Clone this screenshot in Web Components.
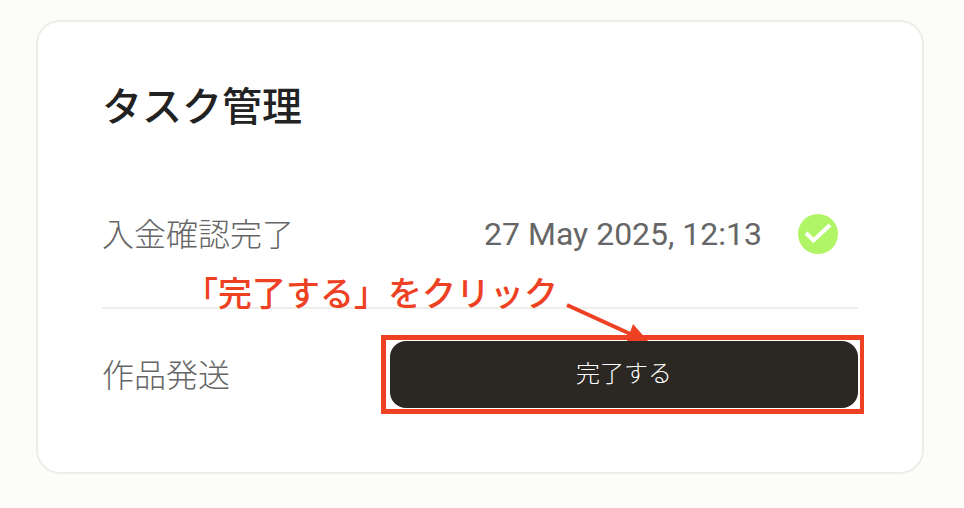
<!DOCTYPE html>
<html lang="ja">
<head>
<meta charset="utf-8">
<title>タスク管理</title>
<style>
  html, body { margin:0; height:100%; }
  body { background:#fcfcfa; font-family:Roboto, "Noto Sans CJK JP", sans-serif; }
</style>
</head>
<body>
<task-card>
  <span slot="title">タスク管理</span>
  <task-row label="入金確認完了" date="27 May 2025, 12:13" done></task-row>
  <task-row label="作品発送" action="完了する" last></task-row>
  <click-note text="「完了する」をクリック"></click-note>
</task-card>

<script>
/* card */
class TaskCard extends HTMLElement {
	constructor() {
		super();
		let shadowRoot = this.attachShadow({ mode: 'open' });
		shadowRoot.innerHTML = `
		<style>
			:host {
				display:block;
				position:relative;
				box-sizing:border-box;
				width:888px;
				height:454px;
				margin:20px 0 0 36px;
				padding:61px 64px 0 64px;
				background:#fff;
				border:2px solid #eeeee9;
				border-radius:24px;
			}
			h2 {
				margin:0 0 49px;
				font-size:40px;
				line-height:50px;
				font-weight:500;
				color:#222;
			}
		</style>
		<h2><slot name="title"></slot></h2>
		<slot></slot>
		`;
	}
}

/* row: label on the left, then a date + check or a button */
class TaskRow extends HTMLElement {
	constructor() {
		super();
		let shadowRoot = this.attachShadow({ mode: 'open' });
		var date = this.getAttribute('date');
		var action = this.getAttribute('action');
		var right = action
			? `<button>${action}</button>`
			: `<span class="date">${date}</span>
			   <svg viewBox="0 0 40 40" width="40" height="40"><circle cx="20" cy="20" r="20" fill="#b0f565"/><path d="M8 19l7.5 7.5L32 11" fill="none" stroke="#fff" stroke-width="4"/></svg>`;
		shadowRoot.innerHTML = `
		<style>
			:host {
				display:flex;
				box-sizing:border-box;
				align-items:center;
				justify-content:space-between;
				font-size:32px;
				color:#666;
			}
			:host(:not([last])) {
				height:127px;
				padding:0 20px 21px 0;
				border-bottom:2px solid #eeeee9;
			}
			:host([last]) { height:131px; }
			.label { font-weight:300; margin-bottom:4px; }
			.right { display:flex; align-items:center; gap:36px; }
			svg { display:block; }
			button {
				display:block;
				width:468px;
				height:67px;
				padding:0 0 7px;
				border:none;
				border-radius:16px;
				background:#2b2824;
				color:#fff;
				font:300 24px Roboto, "Noto Sans CJK JP", sans-serif;
			}
		</style>
		<span class="label">${this.getAttribute('label')}</span>
		<div class="right">${right}</div>
		`;
	}
}

/* red annotation over the card */
class ClickNote extends HTMLElement {
	constructor() {
		super();
		let shadowRoot = this.attachShadow({ mode: 'open' });
		shadowRoot.innerHTML = `
		<style>
			:host {
				position:absolute;
				left:0;
				top:0;
				width:100%;
				height:100%;
				pointer-events:none;
			}
			.text {
				position:absolute;
				left:146px;
				top:250px;
				font-size:34px;
				line-height:44px;
				font-weight:500;
				color:#ee4123;
				white-space:nowrap;
			}
			.box {
				position:absolute;
				left:343px;
				top:313px;
				width:483px;
				height:79px;
				box-sizing:border-box;
				border:solid #ee4123;
				border-width:5px 4px 5px 5px;
			}
			svg { position:absolute; left:0; top:0; }
		</style>
		<div class="text">${this.getAttribute('text')}</div>
		<div class="box"></div>
		<svg width="884" height="450">
			<path d="M529 283l70 32" stroke="#ee4123" stroke-width="4" fill="none"/>
			<path d="M610 319h-21l6-17z" fill="#ee4123"/>
		</svg>
		`;
	}
}

customElements.define('task-card', TaskCard);
customElements.define('task-row', TaskRow);
customElements.define('click-note', ClickNote);
</script>
</body>
</html>
